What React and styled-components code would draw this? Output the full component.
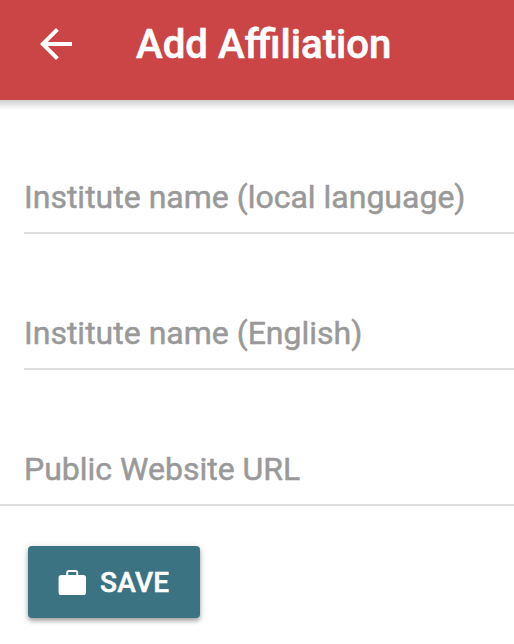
import React from 'react';
import styled, { createGlobalStyle } from 'styled-components';

const GlobalStyle = createGlobalStyle`
  * { box-sizing: border-box; }
  body { margin: 0; background: #fff; font-family: Roboto, sans-serif; overflow: hidden; }
`;

const Screen = styled.div`
  width: 514px;
  height: 644px;
  background: #fff;
  overflow: hidden;
`;

const Toolbar = styled.header`
  height: 100px;
  padding: 0 0 12px 32px;
  display: flex;
  align-items: center;
  background: #cb4446;
  color: #fff;
`;

const ToolbarShadow = styled.div`
  height: 10px;
  background: linear-gradient(#cfcfcf, #dadada 25%, #efefef 60%, #fff);
`;

const BackButton = styled.button`
  width: 48px;
  height: 48px;
  padding: 0;
  border: 0;
  background: none;
  color: inherit;
  svg { display: block; }
`;

const Title = styled.h1`
  margin: 2px 0 0 56px;
  font-size: 40.2px;
  line-height: 48px;
  font-weight: 500;
  white-space: nowrap;
  -webkit-text-stroke: 0.6px currentColor;
`;

const Form = styled.form`
  display: flex;
  flex-direction: column;
`;

const Field = styled.label`
  display: flex;
  align-items: flex-end;
  height: ${(p) => (p.$first ? 124 : 136)}px;
  margin-left: ${(p) => (p.$full ? 0 : 24)}px;
  padding: 0 0 16px ${(p) => (p.$full ? 24 : 0)}px;
  border-bottom: 2px solid #dedede;
  color: #999;
  font-size: 32px;
  line-height: 38px;
  white-space: nowrap;
  -webkit-text-stroke: 0.5px currentColor;
`;

const SaveButton = styled.button`
  width: 172px;
  height: 72px;
  margin: 40px 0 0 28px;
  padding: 0 0 0 28px;
  display: flex;
  align-items: center;
  gap: 12px;
  border: 0;
  border-radius: 4px;
  background: #3c7382;
  color: #fff;
  font: 500 28px/34px Roboto, sans-serif;
  box-shadow: 0 3px 4px rgba(0, 0, 0, 0.3), 0 1px 9px rgba(0, 0, 0, 0.13);
`;

const SaveText = styled.span`
  padding-top: 2px;
  letter-spacing: 0.3px;
  -webkit-text-stroke: 0.5px currentColor;
`;

export default function App() {
  return (
    <Screen>
      <GlobalStyle />
      <Toolbar>
        <BackButton type="button" aria-label="Back">
          <svg width="48" height="48" viewBox="0 0 24 24" fill="currentColor">
            <path d="M20 11H7.83l5.59-5.59L12 4l-8 8 8 8 1.41-1.41L7.83 13H20v-2z" />
          </svg>
        </BackButton>
        <Title>Add Affiliation</Title>
      </Toolbar>
      <ToolbarShadow />
      <Form>
        <Field $first>Institute name (local language)</Field>
        <Field>Institute name (English)</Field>
        <Field $full>Public Website URL</Field>
        <SaveButton type="button">
          <svg width="32" height="32" viewBox="0 0 32 32">
            <path
              d="M11.2 9.500V6.500Q11.200 5 12.700 5h7Q21.200 5 21.200 6.500V9.500"
              fill="none"
              stroke="currentColor"
              strokeWidth="2"
            />
            <rect x="2.600" y="9" width="27.400" height="20" rx="2.600" fill="currentColor" />
          </svg>
          <SaveText>SAVE</SaveText>
        </SaveButton>
      </Form>
    </Screen>
  );
}
